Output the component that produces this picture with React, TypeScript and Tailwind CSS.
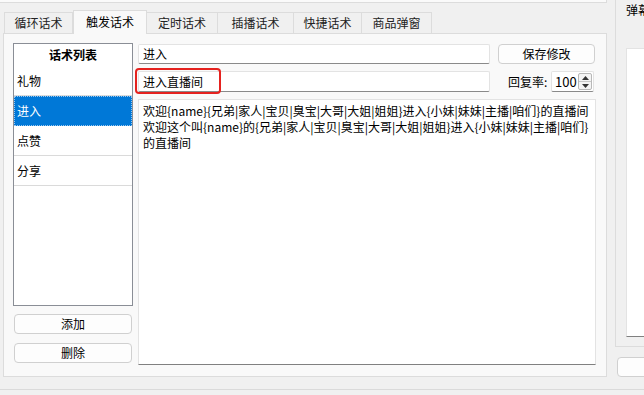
import React from "react";

const tabs = [
  { label: "循环话术", w: "w-[69px]" },
  { label: "触发话术", w: "w-[74px]", active: true },
  { label: "定时话术", w: "w-[71px]" },
  { label: "插播话术", w: "w-[76px]" },
  { label: "快捷话术", w: "w-[68px]" },
  { label: "商品弹窗", w: "w-[70px]" },
];

const items = ["礼物", "进入", "点赞", "分享"];

function Button({ children, className = "" }: { children?: React.ReactNode; className?: string }) {
  return (
    <div
      className={`flex items-center justify-center rounded-[4px] border border-[#d0d0d0] bg-[#fdfdfd] ${className}`}
    >
      {children}
    </div>
  );
}

export default function App() {
  return (
    <div className="relative w-[644px] h-[395px] overflow-hidden bg-[#f0f0f0] text-[12px] leading-[16px] text-black font-['Noto_Sans_CJK_SC','Noto_Sans',sans-serif]">
      <div className="flex h-[389px]">
        {/* left: tab widget */}
        <div className="w-[607px] shrink-0 flex flex-col">
          <div className="h-[3px] border-b border-r border-[#dcdcdc] bg-[#fafafa]" />

          {/* tab bar */}
          <div className="mt-[7px] h-[24px] flex items-end pl-[4px]">
            {tabs.map((t) =>
              t.active ? (
                <div
                  key={t.label}
                  className={`${t.w} relative z-10 h-[24px] flex items-center justify-center border border-b-0 border-[#dcdcdc] bg-[#f9f9f9] pb-[2px]`}
                >
                  {t.label}
                </div>
              ) : (
                <div
                  key={t.label}
                  className={`${t.w} h-[22px] flex items-center justify-center border border-l-0 first:border-l border-[#dcdcdc] bg-[#f0f0f0] text-[#222]`}
                >
                  {t.label}
                </div>
              )
            )}
          </div>

          {/* tab panel */}
          <div className="-mt-[1px] ml-[3px] h-[344px] flex gap-[5px] border border-[#dcdcdc] bg-[#f9f9f9] pl-[9px] pt-[9px]">
            {/* list column */}
            <div className="w-[120px] shrink-0 flex flex-col">
              <div className="h-[263px] border border-[#8a8e96] bg-white">
                <div className="h-[22px] flex items-center justify-center font-bold">话术列表</div>
                {items.map((it) =>
                  it === "进入" ? (
                    <div
                      key={it}
                      className="h-[30px] flex items-center pl-[2px] bg-[#0078d7] text-white border border-dotted border-[#9cc8ee]"
                    >
                      {it}
                    </div>
                  ) : (
                    <div key={it} className="h-[30px] flex items-center pl-[3px] border-b border-[#dadada]">
                      {it}
                    </div>
                  )
                )}
              </div>
              <Button className="mt-[8px] h-[20px] mx-[1px]">添加</Button>
              <Button className="mt-[9px] h-[20px] mx-[1px]">删除</Button>
            </div>

            {/* edit column */}
            <div className="w-[458px] shrink-0 pt-[1px] flex flex-col">
              <div className="flex h-[20px]">
                <div className="w-[352px] flex items-center pl-[4px] rounded-[2px] border border-[#e3e3e3] border-b-[#8a8a8a] bg-white">
                  进入
                </div>
                <Button className="ml-[8px] w-[97px]">保存修改</Button>
              </div>
              <div className="mt-[7px] flex h-[21px] items-center">
                <div className="w-[352px] h-full flex items-center pl-[4px] rounded-[2px] border border-[#e3e3e3] border-b-[#8a8a8a] bg-white">
                  进入直播间
                </div>
                <div className="ml-[18px] w-[45px]">回复率:</div>
                <div className="ml-[-2px] w-[43px] h-full flex items-center justify-between rounded-[2px] border border-[#e3e3e3] border-b-[#8a8a8a] bg-white pl-[3px] pr-[1px]">
                  <span className="text-[13px]">100</span>
                  <div className="w-[14px] h-[17px] flex flex-col border border-[#b8b8b8] rounded-[2px] bg-[#f4f4f4]">
                    <div className="flex-1 flex items-center justify-center border-b border-[#c8c8c8]">
                      <svg width="7" height="4" viewBox="0 0 7 4">
                        <path d="M0 4 L3.5 0 L7 4 Z" fill="#333" />
                      </svg>
                    </div>
                    <div className="flex-1 flex items-center justify-center">
                      <svg width="7" height="4" viewBox="0 0 7 4">
                        <path d="M0 0 L3.5 4 L7 0 Z" fill="#333" />
                      </svg>
                    </div>
                  </div>
                </div>
              </div>
              <div className="mt-[7px] h-[266px] border border-[#e3e3e3] border-b-[#808080] bg-white px-[4px] pt-[3px] whitespace-nowrap">
                <div>欢迎{"{name}{兄弟|家人|宝贝|臭宝|大哥|大姐|姐姐}"}进入{"{小妹|妹妹|主播|咱们}"}的直播间</div>
                <div>欢迎这个叫{"{name}"}的{"{兄弟|家人|宝贝|臭宝|大哥|大姐|姐姐}"}进入{"{小妹|妹妹|主播|咱们}"}</div>
                <div>的直播间</div>
              </div>
            </div>
          </div>
        </div>

        {/* right: danmaku group */}
        <div className="w-[37px] shrink-0 pl-[8px] flex flex-col">
          <div className="w-[60px] h-[347px] border-l border-b border-[#dcdcdc] flex flex-col">
            <div className="pl-[10px] pt-[2px] h-[16px] whitespace-nowrap">弹幕</div>
            <div className="ml-[10px] mt-[32px] h-[289px] border-l border-t border-[#e3e3e3] border-b border-b-[#808080] bg-white" />
          </div>
          <Button className="mt-[10px] ml-[2px] h-[20px] w-[60px]" />
        </div>
      </div>
      <div className="h-[6px] border-t border-[#dadada] bg-[#f0f0f0]" />

      {/* red annotation box */}
      <div className="absolute left-[135px] top-[68px] w-[86px] h-[26px] rounded-[4px] border-2 border-[#e5221f]" />
    </div>
  );
}
